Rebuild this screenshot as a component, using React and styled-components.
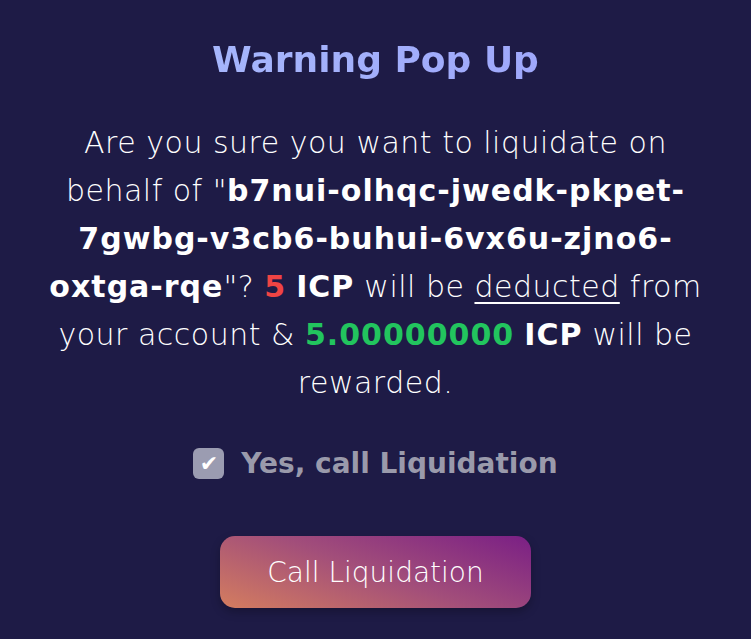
import styled, { createGlobalStyle } from "styled-components"

const Global = createGlobalStyle`
    html, body {
        margin: 0;
        padding: 0;
        background: #1e1b46;
    }
    body {
        font-family: "DejaVu Sans", "Noto Sans", sans-serif;
        color: #ffffff;
    }
`

const principal = "b7nui-olhqc-jwedk-pkpet-7gwbg-v3cb6-buhui-6vx6u-zjno6-oxtga-rqe"

export default function App() {
    const segments = principal.split(/(?<=-)/)
    return (
        <>
            <Global />
            <Popup>
                <Title>Warning Pop Up</Title>
                <Message>
                    <span>Are you sure you want to liquidate on </span>
                    <span>behalf of "</span>
                    {segments.map((s, i) => <Strong key={i}>{s}</Strong>)}
                    <span>"? </span>
                    <Strong color="#ef4444">5</Strong> <Strong>ICP</Strong>
                    <span> will be </span>
                    <u>deducted</u>
                    <span> from </span>
                    <span>your account &amp; </span>
                    <Strong color="#22c55e">5.00000000</Strong> <Strong>ICP</Strong>
                    <span> will be </span>
                    <span>rewarded.</span>
                </Message>
                <CheckRow>
                    <CheckBox>✔</CheckBox>
                    <CheckLabel>Yes, call Liquidation</CheckLabel>
                </CheckRow>
                <ActionButton>Call Liquidation</ActionButton>
            </Popup>
        </>
    )
}

const Popup = styled.div`
    width: 751px;
    height: 639px;
    box-sizing: border-box;
    padding: 34px 40px 0;
    display: flex;
    flex-direction: column;
    align-items: center;
`

const Title = styled.h1`
    margin: 0;
    font-size: 36px;
    font-weight: 700;
    line-height: 52px;
    color: #a3b0fb;
    background: linear-gradient(90deg, #a6b6fc, #9fa8fb);
    -webkit-background-clip: text;
    background-clip: text;
    -webkit-text-fill-color: transparent;
`

const Message = styled.p`
    margin: 33px 0 0;
    font-size: 30px;
    font-weight: 300;
    letter-spacing: 0.5px;
    line-height: 48px;
    text-align: center;
    width: 664px;
    u {
        text-decoration-thickness: 2px;
        text-underline-offset: 5px;
    }
`

const Strong = styled.b`
    font-weight: 700;
    letter-spacing: 1px;
    color: ${p => p.color || "#ffffff"};
`

const CheckRow = styled.div`
    margin-top: 40px;
    display: flex;
    align-items: center;
    gap: 17px;
`

const CheckBox = styled.span`
    width: 31px;
    height: 31px;
    border-radius: 6px;
    background: #9b9cb1;
    color: #ffffff;
    font-size: 22px;
    line-height: 1;
    display: flex;
    align-items: center;
    justify-content: center;
`

const CheckLabel = styled.span`
    font-size: 28px;
    font-weight: 700;
    color: #9a9aab;
`

const ActionButton = styled.button`
    margin-top: 56px;
    width: 311px;
    height: 72px;
    border: none;
    border-radius: 15px;
    background: linear-gradient(200deg, #7a1f85 0%, #a24e7a 50%, #d47d5f 100%);
    color: #ffffff;
    font-family: "DejaVu Sans", "Noto Sans", sans-serif;
    font-size: 28px;
    font-weight: 300;
    box-shadow: 0 4px 10px rgba(0, 0, 0, 0.25);
`
